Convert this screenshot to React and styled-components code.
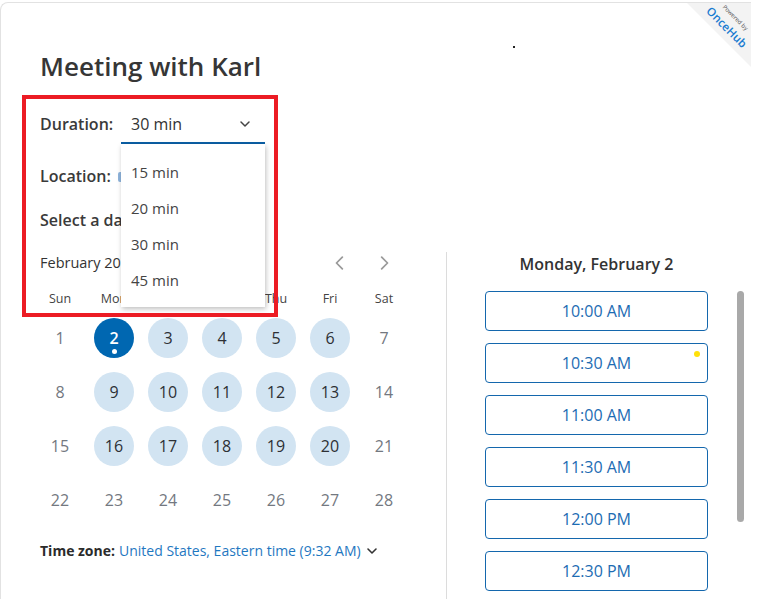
import React from "react";
import styled, { createGlobalStyle } from "styled-components";

const Global = createGlobalStyle`
  html, body { margin: 0; padding: 0; background: #fff; }
  body { font-family: "Open Sans", "Noto Sans", sans-serif; color: #333; overflow: hidden; }
  * { box-sizing: border-box; }
`;

const Card = styled.div`
  position: relative;
  width: 751px;
  height: 597px;
  margin-top: 2px;
  border-top: 1px solid #e2e2e2;
  border-left: 1px solid #e2e2e2;
  border-top-left-radius: 8px;
  padding-top: 46px;
  overflow: hidden;
`;

const Header = styled.div`
  padding-left: 39px;
`;

const Title = styled.h1`
  margin: 0;
  font-size: 26px;
  line-height: 34px;
  font-weight: 600;
  color: #363636;
`;

const FieldRow = styled.div`
  display: flex;
  align-items: flex-start;
  margin-top: ${(p) => p.$mt}px;
  height: ${(p) => p.$h}px;
`;

const Label = styled.span`
  width: 81px;
  flex: none;
  margin-top: ${(p) => p.$mt || 0}px;
  font-size: 16px;
  line-height: 24px;
  font-weight: 600;
  color: #3a3a3a;
`;

const SelectWrap = styled.div`
  position: relative;
  width: 144px;
  height: 34px;
`;

const SelectBox = styled.div`
  display: flex;
  align-items: center;
  justify-content: space-between;
  height: 34px;
  padding: 2px 14px 6px 10px;
  border-bottom: 2px solid #0b5fa5;
  font-size: 16px;
  line-height: 24px;
  color: #333;
`;

const Menu = styled.ul`
  position: absolute;
  top: 100%;
  left: 0;
  width: 144px;
  margin: 0;
  padding: 10px 0 9px;
  list-style: none;
  background: #fff;
  box-shadow: 1px 2px 5px rgba(0, 0, 0, 0.25);
  z-index: 5;
`;

const Option = styled.li`
  height: 36px;
  padding-left: 10px;
  font-size: 15px;
  line-height: 36px;
  color: #444;
`;

const LocIcon = styled.span`
  display: inline-block;
  width: 10px;
  height: 10px;
  margin-left: -3px;
  margin-top: 8px;
  border-radius: 2px;
  background: #8fb4dc;
`;

const SectionLabel = styled.div`
  margin-top: 20px;
  font-size: 16px;
  line-height: 24px;
  font-weight: 600;
  color: #3a3a3a;
`;

const Columns = styled.div`
  display: flex;
  margin-top: 20px;
`;

const LeftCol = styled.div`
  width: 446px;
  flex: none;
  padding-left: 39px;
  border-right: 1px solid #dcdcdc;
  height: 360px;
`;

const MonthRow = styled.div`
  display: flex;
  align-items: center;
  justify-content: space-between;
  height: 22px;
  width: 366px;
`;

const MonthName = styled.span`
  font-size: 14.5px;
  line-height: 22px;
  color: #333;
`;

const Nav = styled.div`
  display: flex;
`;

const NavBtn = styled.span`
  width: 44px;
  display: flex;
  justify-content: center;
`;

const Grid = styled.div`
  display: grid;
  grid-template-columns: repeat(7, 54px);
  margin-left: -7px;
`;

const WeekDays = styled(Grid)`
  margin-top: 16px;
`;

const WeekDay = styled.span`
  text-align: center;
  font-size: 12.5px;
  line-height: 18px;
  color: #444;
`;

const Days = styled(Grid)`
  margin-top: 3px;
  grid-auto-rows: 54px;
`;

const DayCell = styled.div`
  display: flex;
  align-items: center;
  justify-content: center;
`;

const Day = styled.span`
  position: relative;
  width: 40px;
  height: 40px;
  border-radius: 50%;
  display: flex;
  align-items: center;
  justify-content: center;
  font-size: 16px;
  line-height: 24px;
  background: ${(p) => (p.$sel ? "#0067b1" : p.$avail ? "#d2e4f2" : "transparent")};
  color: ${(p) => (p.$sel ? "#fff" : p.$avail ? "#2d3035" : "#737880")};
  font-weight: ${(p) => (p.$sel ? 600 : 400)};
`;

const TodayDot = styled.span`
  position: absolute;
  left: 50%;
  bottom: 4px;
  width: 5px;
  height: 5px;
  margin-left: -2.5px;
  border-radius: 50%;
  background: #fff;
`;

const TimeZone = styled.div`
  display: flex;
  align-items: center;
  margin-top: 14px;
  font-size: 14px;
  line-height: 20px;
`;

const TzLabel = styled.span`
  font-weight: 700;
  color: #2b2b2b;
  margin-right: 4px;
`;

const TzValue = styled.span`
  color: #1f78c1;
  margin-right: 5px;
`;

const RightCol = styled.div`
  display: flex;
  padding-left: 38px;
`;

const SlotArea = styled.div`
  width: 223px;
`;

const DayTitle = styled.div`
  text-align: center;
  font-size: 16px;
  line-height: 24px;
  font-weight: 600;
  color: #333;
`;

const SlotList = styled.div`
  display: flex;
  flex-direction: column;
  gap: 12px;
  margin-top: 15px;
`;

const Slot = styled.div`
  position: relative;
  height: 40px;
  border: 1px solid #1467ad;
  border-radius: 4px;
  display: flex;
  align-items: center;
  justify-content: center;
  font-size: 16px;
  color: #1d6cb3;
`;

const NewDot = styled.span`
  position: absolute;
  top: 7px;
  right: 7px;
  width: 6px;
  height: 6px;
  border-radius: 50%;
  background: #ffe10a;
`;

const Track = styled.div`
  width: 7px;
  margin-left: 29px;
  padding-top: 39px;
`;

const Thumb = styled.div`
  width: 7px;
  height: 231px;
  border-radius: 4px;
  background: #a9a9a9;
`;

const Corner = styled.svg`
  position: absolute;
  top: 0;
  right: 0;
`;

const Speck = styled.span`
  position: absolute;
  left: 512px;
  top: 43px;
  width: 2px;
  height: 2px;
  background: #222;
`;

const Highlight = styled.div`
  position: absolute;
  left: 21px;
  top: 92px;
  width: 256px;
  height: 222px;
  border: 4.5px solid #ec1c24;
  pointer-events: none;
  z-index: 10;
`;

const Chevron = ({ dir = "down", size = 12, color = "#444", w = 1.6 }) => {
  const pts = {
    down: "2,4 6,8 10,4",
    left: "8,1 3,6 8,11",
    right: "4,1 9,6 4,11",
  }[dir];
  return (
    <svg width={size} height={size} viewBox="0 0 12 12">
      <polyline points={pts} fill="none" stroke={color} strokeWidth={w} strokeLinecap="round" strokeLinejoin="round" />
    </svg>
  );
};

const weeks = [
  [1, 2, 3, 4, 5, 6, 7],
  [8, 9, 10, 11, 12, 13, 14],
  [15, 16, 17, 18, 19, 20, 21],
  [22, 23, 24, 25, 26, 27, 28],
];
const available = new Set([3, 4, 5, 6, 9, 10, 11, 12, 13, 16, 17, 18, 19, 20]);
const slots = ["10:00 AM", "10:30 AM", "11:00 AM", "11:30 AM", "12:00 PM", "12:30 PM"];

export default function App() {
  return (
    <>
      <Global />
      <Card>
        <Header>
          <Title>Meeting with Karl</Title>
          <FieldRow $mt={27} $h={34}>
            <Label $mt={2}>Duration:</Label>
            <SelectWrap>
              <SelectBox>
                <span>30 min</span>
                <Chevron dir="down" size={12} color="#444" w={1.5} />
              </SelectBox>
              <Menu>
                {["15 min", "20 min", "30 min", "45 min"].map((o) => (
                  <Option key={o}>{o}</Option>
                ))}
              </Menu>
            </SelectWrap>
          </FieldRow>
          <FieldRow $mt={20} $h={24}>
            <Label>Location:</Label>
            <LocIcon />
          </FieldRow>
          <SectionLabel>Select a date</SectionLabel>
        </Header>
        <Columns>
          <LeftCol>
            <MonthRow>
              <MonthName>February 2026</MonthName>
              <Nav>
                <NavBtn>
                  <Chevron dir="left" size={14} color="#9a9a9a" w={1.5} />
                </NavBtn>
                <NavBtn>
                  <Chevron dir="right" size={14} color="#9a9a9a" w={1.5} />
                </NavBtn>
              </Nav>
            </MonthRow>
            <WeekDays>
              {["Sun", "Mon", "Tue", "Wed", "Thu", "Fri", "Sat"].map((d) => (
                <WeekDay key={d}>{d}</WeekDay>
              ))}
            </WeekDays>
            <Days>
              {weeks.flat().map((d) => (
                <DayCell key={d}>
                  <Day $sel={d === 2} $avail={available.has(d)}>
                    {d}
                    {d === 2 && <TodayDot />}
                  </Day>
                </DayCell>
              ))}
            </Days>
            <TimeZone>
              <TzLabel>Time zone:</TzLabel>
              <TzValue>United States, Eastern time (9:32 AM)</TzValue>
              <Chevron dir="down" size={12} color="#333" w={1.6} />
            </TimeZone>
          </LeftCol>
          <RightCol>
            <SlotArea>
              <DayTitle>Monday, February 2</DayTitle>
              <SlotList>
                {slots.map((s, i) => (
                  <Slot key={s}>
                    {s}
                    {i === 1 && <NewDot />}
                  </Slot>
                ))}
              </SlotList>
            </SlotArea>
            <Track>
              <Thumb />
            </Track>
          </RightCol>
        </Columns>
        <Corner width="64" height="64" viewBox="0 0 64 64">
          <polygon points="0,0 64,0 64,64" fill="#f3f3f3" />
          <text x="48" y="15" transform="rotate(45 48 15)" textAnchor="middle" dominantBaseline="middle" fontFamily="Open Sans, sans-serif" fontSize="6" fill="#555">
            Powered by
          </text>
          <text x="39" y="25" transform="rotate(45 39 25)" textAnchor="middle" dominantBaseline="middle" fontFamily="Open Sans, sans-serif" fontSize="11.5" fontWeight="600" fill="#1a7bd0">
            OnceHub
          </text>
        </Corner>
        <Speck />
        <Highlight />
      </Card>
    </>
  );
}
